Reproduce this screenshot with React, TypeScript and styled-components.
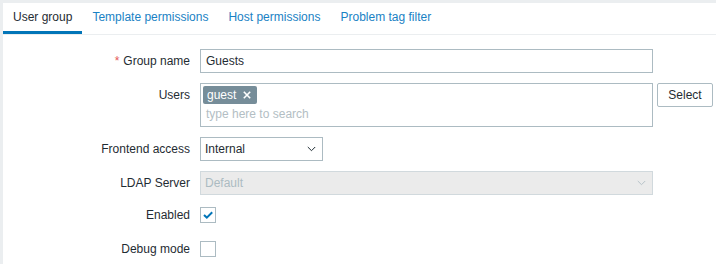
import React from 'react';
import styled, { createGlobalStyle } from 'styled-components';

const GlobalStyle = createGlobalStyle`
  html, body {
    margin: 0;
    padding: 0;
    background: #ebeef0;
  }
  body {
    font-family: "Liberation Sans", Arial, sans-serif;
    font-size: 12px;
    color: #1f2c33;
  }
`;

const Page = styled.div`
  padding: 3px 0 0 3px;
  height: 264px;
  box-sizing: border-box;
`;

const Panel = styled.div`
  background: #fff;
  height: 100%;
`;

const TabBar = styled.div`
  display: flex;
  border-bottom: 1px solid #ebeef0;
`;

const Tab = styled.div<{ $active?: boolean }>`
  padding: 0 10px;
  line-height: 28px;
  border-bottom: 3px solid ${({ $active }) => ($active ? '#0275b8' : 'transparent')};
  color: ${({ $active }) => ($active ? '#1f2c33' : '#1a82c4')};
  white-space: nowrap;
`;

const Form = styled.div`
  display: grid;
  grid-template-columns: 187px 1fr;
  column-gap: 10px;
  row-gap: 10px;
  padding-top: 14px;
`;

const Label = styled.div<{ $compact?: boolean }>`
  text-align: right;
  line-height: ${({ $compact }) => ($compact ? '20px' : '24px')};
  min-height: 24px;
  white-space: nowrap;
`;

const Required = styled.span`
  color: #e45959;
  margin-right: 4px;
`;

const Field = styled.div`
  display: flex;
  align-items: flex-start;
  gap: 4px;
  min-height: 24px;
`;

const TextBox = styled.div`
  box-sizing: border-box;
  width: 453px;
  height: 24px;
  border: 1px solid #acbbc2;
  padding: 0 5px;
  line-height: 22px;
`;

const MultiSelect = styled.div`
  box-sizing: border-box;
  width: 453px;
  height: 44px;
  border: 1px solid #acbbc2;
  padding: 2px;
  display: flex;
  flex-direction: column;
  align-items: flex-start;
`;

const TagChip = styled.span`
  display: inline-flex;
  align-items: center;
  gap: 7px;
  background: #768d99;
  color: #fff;
  border-radius: 2px;
  height: 18px;
  padding: 0 6px 0 4px;
`;

const Placeholder = styled.div`
  color: #b3bec4;
  padding-left: 3px;
  line-height: 20px;
`;

const Button = styled.div`
  box-sizing: border-box;
  height: 24px;
  width: 56px;
  border: 1px solid #acbbc2;
  border-radius: 2px;
  text-align: center;
  line-height: 22px;
  background: #fff;
`;

const SelectBox = styled.div<{ $width: number; $disabled?: boolean }>`
  box-sizing: border-box;
  width: ${({ $width }) => $width}px;
  height: 24px;
  border: 1px solid ${({ $disabled }) => ($disabled ? '#d1d9dd' : '#acbbc2')};
  background: ${({ $disabled }) => ($disabled ? '#ebebeb' : '#fff')};
  color: ${({ $disabled }) => ($disabled ? '#acbbc2' : '#1f2c33')};
  display: flex;
  align-items: center;
  justify-content: space-between;
  padding: 0 6px 0 4px;
`;

const CheckBox = styled.div<{ $checked?: boolean }>`
  box-sizing: border-box;
  width: 16px;
  height: 16px;
  margin-top: 2px;
  border: 1px solid #acbbc2;
  background: #fff;
  display: flex;
  align-items: center;
  justify-content: center;
`;

const Chevron = ({ color }: { color: string }) => (
  <svg width="9" height="6" viewBox="0 0 9 6">
    <path d="M0.8 1 L4.5 4.7 L8.2 1" fill="none" stroke={color} strokeWidth="1" />
  </svg>
);

const Cross = () => (
  <svg width="8" height="8" viewBox="0 0 8 8">
    <path d="M0.8 0.8 L7.2 7.2 M7.2 0.8 L0.8 7.2" stroke="#fff" strokeWidth="1.6" />
  </svg>
);

const Check = () => (
  <svg width="10" height="8" viewBox="0 0 10 8">
    <path d="M1 4 L3.8 6.6 L9.2 1.2" fill="none" stroke="#0275b8" strokeWidth="2" />
  </svg>
);

export default function App() {
  return (
    <>
      <GlobalStyle />
      <Page>
        <Panel>
          <TabBar>
            <Tab $active>User group</Tab>
            <Tab>Template permissions</Tab>
            <Tab>Host permissions</Tab>
            <Tab>Problem tag filter</Tab>
          </TabBar>
          <Form>
            <Label>
              <Required>*</Required>Group name
            </Label>
            <Field>
              <TextBox>Guests</TextBox>
            </Field>

            <Label>Users</Label>
            <Field>
              <MultiSelect>
                <TagChip>
                  guest
                  <Cross />
                </TagChip>
                <Placeholder>type here to search</Placeholder>
              </MultiSelect>
              <Button>Select</Button>
            </Field>

            <Label>Frontend access</Label>
            <Field>
              <SelectBox $width={123}>
                Internal
                <Chevron color="#1f2c33" />
              </SelectBox>
            </Field>

            <Label>LDAP Server</Label>
            <Field>
              <SelectBox $width={453} $disabled>
                Default
                <Chevron color="#b7c3c9" />
              </SelectBox>
            </Field>

            <Label $compact>Enabled</Label>
            <Field>
              <CheckBox $checked>
                <Check />
              </CheckBox>
            </Field>

            <Label $compact>Debug mode</Label>
            <Field>
              <CheckBox />
            </Field>
          </Form>
        </Panel>
      </Page>
    </>
  );
}
